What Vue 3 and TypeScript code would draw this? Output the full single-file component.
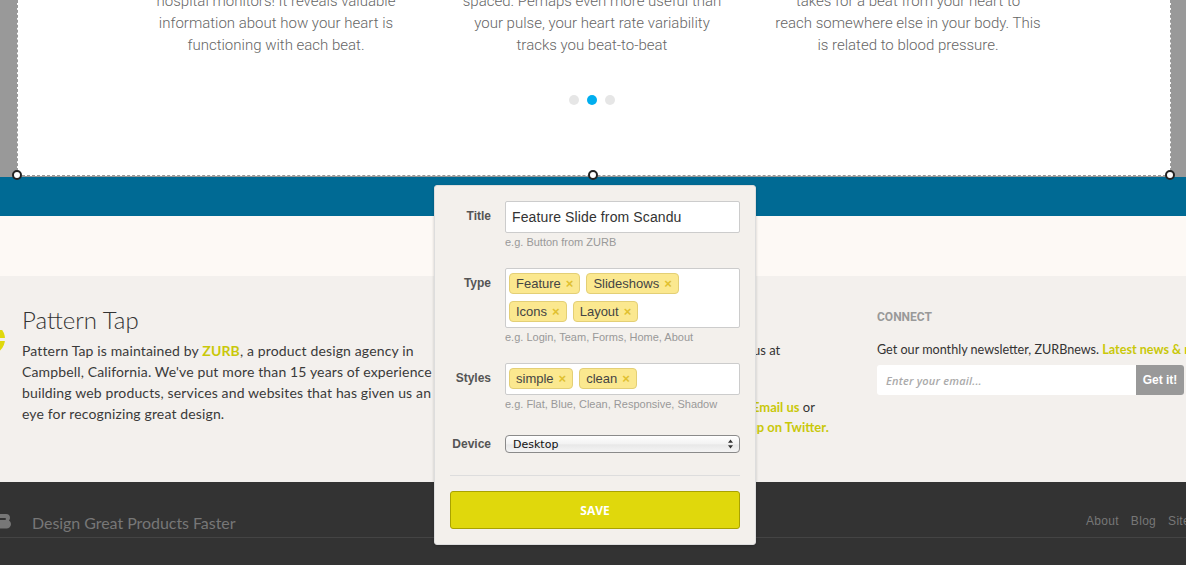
<script setup lang="ts">
const columns = [
  ["hospital monitors! It reveals valuable", "information about how your heart is", "functioning with each beat."],
  ["spaced. Perhaps even more useful than", "your pulse, your heart rate variability", "tracks you beat-to-beat"],
  ["takes for a beat from your heart to", "reach somewhere else in your body. This", "is related to blood pressure."],
];
const typeTags = ["Feature", "Slideshows", "Icons", "Layout"];
const styleTags = ["simple", "clean"];
const links = ["About", "Blog", "Site"];
</script>

<template>
  <div class="page">
    <section class="stage">
      <div class="frame">
        <div class="cols">
          <p v-for="(lines, i) in columns" :key="i" class="col">
            <span v-for="line in lines" :key="line">{{ line }}</span>
          </p>
        </div>
        <div class="dots">
          <i></i>
          <i class="on"></i>
          <i></i>
        </div>
        <b class="handle h-left"></b>
        <b class="handle h-mid"></b>
        <b class="handle h-right"></b>
      </div>
    </section>

    <div class="band"></div>
    <div class="cream"></div>

    <section class="info">
      <svg class="zurb-mark" width="6" height="32" viewBox="0 0 6 32">
        <circle cx="-11" cy="17" r="16" fill="#e0d80c" />
        <rect x="0" y="4" width="6" height="4" fill="#f3f0ed" />
        <rect x="0" y="16" width="6" height="3" fill="#f3f0ed" />
      </svg>
      <div class="about">
        <h2>Pattern Tap</h2>
        <p>
          Pattern Tap is maintained by <a>ZURB</a>, a product design agency in<br />
          Campbell, California. We've put more than 15 years of experience<br />
          building web products, services and websites that has given us an<br />
          eye for recognizing great design.
        </p>
      </div>
      <div class="contact">
        <p class="gap">Talk to us at</p>
        <p>Please <a>Email us</a> or</p>
        <p><a>Hit us up on Twitter.</a></p>
      </div>
      <div class="connect">
        <h3>CONNECT</h3>
        <p>Get our monthly newsletter, ZURBnews. <a>Latest news &amp; more</a></p>
        <div class="signup">
          <span>Enter your email...</span>
          <button type="button">Get it!</button>
        </div>
      </div>
    </section>

    <footer class="dark">
      <div class="dark-row">
        <svg width="11" height="15" viewBox="0 0 11 15">
          <path d="M-6 0h12a4 4 0 0 1 4 4 4 4 0 0 1-1 2.500 4 4 0 0 1 2 3.500 4.500 4.500 0 0 1-4.500 4.500H-6z" fill="#777" />
          <rect x="-2" y="4" width="8" height="2" rx="1" fill="#333" />
        </svg>
        <span class="tagline">Design Great Products Faster</span>
        <nav>
          <a v-for="l in links" :key="l">{{ l }}</a>
        </nav>
      </div>
    </footer>

    <form class="popup" @submit.prevent>
      <div class="row">
        <label>Title</label>
        <div class="field">
          <input class="text" value="Feature Slide from Scandu" />
          <small>e.g. Button from ZURB</small>
        </div>
      </div>
      <div class="row">
        <label>Type</label>
        <div class="field">
          <div class="tags">
            <span v-for="t in typeTags" :key="t" class="tag">{{ t }}<em>×</em></span>
          </div>
          <small>e.g. Login, Team, Forms, Home, About</small>
        </div>
      </div>
      <div class="row row-styles">
        <label>Styles</label>
        <div class="field">
          <div class="tags">
            <span v-for="t in styleTags" :key="t" class="tag">{{ t }}<em>×</em></span>
          </div>
          <small>e.g. Flat, Blue, Clean, Responsive, Shadow</small>
        </div>
      </div>
      <div class="row row-device">
        <label>Device</label>
        <div class="select">
          <span>Desktop</span>
          <svg width="7" height="10" viewBox="0 0 7 10">
            <path d="M3.500 0.500 6 3.800H1zM3.500 9.500 1 6.200h5z" fill="#333" />
          </svg>
        </div>
      </div>
      <hr />
      <button class="save" type="submit">SAVE</button>
    </form>
  </div>
</template>

<style scoped>
.page {
  position: relative;
  width: 1186px;
  height: 565px;
  overflow: hidden;
  font-family: "Liberation Sans", Arial, sans-serif;
  color: #333;
}

.stage {
  height: 177px;
  padding: 0 15px 0 17px;
  box-sizing: border-box;
  background: #999;
}

.frame {
  display: flow-root;
  position: relative;
  height: 176px;
  background: #fff;
  border: 1px dashed #999;
  border-top: 0;
  box-sizing: border-box;
}

.cols {
  display: flex;
  justify-content: center;
  margin-top: -10px;
  padding-right: 4px;
}

.col {
  width: 316px;
  margin: 0;
  text-align: center;
  font: 300 15px/22px Roboto, sans-serif;
  color: #666;
}

.col span {
  display: block;
  white-space: nowrap;
}

.dots {
  display: flex;
  justify-content: center;
  gap: 8px;
  margin-top: 39px;
  padding-right: 4px;
}

.dots i {
  width: 10px;
  height: 10px;
  border-radius: 50%;
  background: #e6e6e6;
}

.dots i.on {
  background: #00aeef;
}

.handle {
  position: absolute;
  bottom: -5px;
  width: 6px;
  height: 6px;
  background: #fff;
  border: 2px solid #222;
  border-radius: 50%;
}

.h-left {
  left: -6px;
}

.h-mid {
  left: 570px;
}

.h-right {
  right: -5px;
}

.band {
  height: 39px;
  background: #006a94;
}

.cream {
  height: 60px;
  background: #fdf9f5;
}

.info {
  display: flex;
  height: 206px;
  background: #f3f0ed;
}

.zurb-mark {
  flex: none;
  margin: 46px 16px 0 0;
}

.about {
  flex: none;
  width: 690px;
  padding-top: 28px;
}

.about h2 {
  margin: 0;
  font: 300 24px/32px Lato, sans-serif;
  color: #333;
}

.about p {
  margin: 4px 0 0;
  font: 400 14px/21px Lato, sans-serif;
  letter-spacing: 0.14px;
  color: #3a3a3a;
  white-space: nowrap;
}

.contact p,
.connect p {
  margin: 0;
  font: 400 13px/20px Lato, sans-serif;
  white-space: nowrap;
}

a {
  color: #c9c80a;
  font-weight: 700;
}

.contact {
  flex: none;
  width: 165px;
  padding-top: 64px;
}

.contact .gap {
  margin-bottom: 37px;
}

.connect h3 {
  margin: 33px 0 0;
  font: 700 12px/16px Roboto, sans-serif;
  color: #999;
}

.connect p {
  margin-top: 15px;
  font-size: 12.6px;
}

.signup {
  display: flex;
  align-items: center;
  justify-content: space-between;
  width: 307px;
  height: 30px;
  margin-top: 5px;
  padding-left: 9px;
  box-sizing: border-box;
  background: #fff;
  border-radius: 3px;
  overflow: hidden;
}

.signup span {
  font: italic 600 11px "Open Sans", sans-serif;
  letter-spacing: 0.2px;
  color: #aaa;
}

.signup button {
  width: 48px;
  height: 30px;
  padding: 0;
  border: 0;
  background: #999;
  color: #fff;
  font: 700 12px "Liberation Sans", sans-serif;
}

.dark {
  height: 83px;
  background: #333;
}

.dark-row {
  display: flex;
  align-items: center;
  height: 56px;
  box-sizing: border-box;
  border-bottom: 1px solid #444;
}

.dark-row svg {
  flex: none;
  margin: 24px 21px 0 0;
}

.tagline {
  flex: 1;
  margin-top: 25px;
  font: 400 16px Lato, sans-serif;
  letter-spacing: -0.05px;
  color: #777;
}

.dark-row nav {
  display: flex;
  gap: 12px;
  width: 100px;
  margin-top: 22px;
  font-size: 12px;
  letter-spacing: 0.3px;
}

.dark-row nav a {
  color: #777;
  font-weight: 400;
}

.popup {
  position: absolute;
  left: 434px;
  top: 185px;
  width: 322px;
  height: 360px;
  padding: 15px;
  box-sizing: border-box;
  background: #f3f0ec;
  border: 1px solid #ddd;
  border-radius: 3px;
  box-shadow: 0 1px 3px rgba(0, 0, 0, 0.2);
}

.row {
  display: flex;
  gap: 14px;
  margin-bottom: 19px;
}

.row label {
  flex: none;
  width: 41px;
  padding-top: 7px;
  text-align: right;
  font-size: 12px;
  line-height: 16px;
  font-weight: 700;
  color: #555;
  white-space: nowrap;
}

.field {
  width: 235px;
}

.text {
  display: block;
  width: 100%;
  height: 32px;
  padding: 0 6px;
  box-sizing: border-box;
  border: 1px solid #ccc;
  border-radius: 2px;
  background: #fff;
  font: 14px "Liberation Sans", sans-serif;
  letter-spacing: 0.12px;
  color: #333;
  outline: 0;
}

small {
  display: block;
  margin-top: 2px;
  font-size: 11px;
  line-height: 14px;
  color: #999;
  white-space: nowrap;
}

.tags {
  display: flex;
  flex-wrap: wrap;
  gap: 7px 6px;
  padding: 4px 3px 5px;
  box-sizing: border-box;
  border: 1px solid #ccc;
  border-radius: 2px;
  background: #fff;
}

.tag {
  display: flex;
  align-items: center;
  height: 21px;
  padding: 0 6px;
  box-sizing: border-box;
  border: 1px solid #e3cf76;
  border-radius: 4px;
  background: #fbe88f;
  font-size: 13px;
  color: #444;
}

.tag em {
  margin-left: 5px;
  font-style: normal;
  font-weight: 700;
  color: #e0c030;
}

.row-styles {
  margin-bottom: 24px;
}

.row-device {
  margin-bottom: 22px;
}

.row-device label {
  padding-top: 1px;
}

.select {
  display: flex;
  align-items: center;
  justify-content: space-between;
  width: 235px;
  height: 18px;
  padding: 0 5px 0 7px;
  box-sizing: border-box;
  border: 1px solid #8a8a8a;
  border-radius: 4px;
  background: linear-gradient(#fff, #f2f2f2 50%, #e8e8e8 55%, #f4f4f4);
  font: 11px "DejaVu Sans", sans-serif;
  color: #111;
}

hr {
  height: 1px;
  margin: 0 0 15px;
  border: 0;
  background: #ddd;
}

.save {
  display: block;
  width: 290px;
  height: 38px;
  padding: 0;
  border: 1px solid #a9a200;
  border-radius: 3px;
  background: #e0d80c;
  color: #fff;
  font: 700 12px "Open Sans", sans-serif;
}
</style>

<style>
html,
body {
  margin: 0;
  background: #333;
}
</style>
